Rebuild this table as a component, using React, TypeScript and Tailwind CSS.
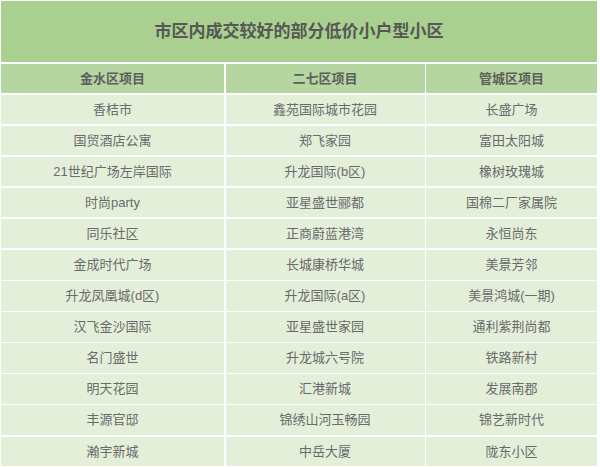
import React from "react";

const rows: [string, string, string][] = [
  ["香桔市", "鑫苑国际城市花园", "长盛广场"],
  ["国贸酒店公寓", "郑飞家园", "富田太阳城"],
  ["21世纪广场左岸国际", "升龙国际(b区)", "橡树玫瑰城"],
  ["时尚party", "亚星盛世郦都", "国棉二厂家属院"],
  ["同乐社区", "正商蔚蓝港湾", "永恒尚东"],
  ["金成时代广场", "长城康桥华城", "美景芳邻"],
  ["升龙凤凰城(d区)", "升龙国际(a区)", "美景鸿城(一期)"],
  ["汉飞金沙国际", "亚星盛世家园", "通利紫荆尚都"],
  ["名门盛世", "升龙城六号院", "铁路新村"],
  ["明天花园", "汇港新城", "发展南郡"],
  ["丰源官邸", "锦绣山河玉畅园", "锦艺新时代"],
  ["瀚宇新城", "中岳大厦", "陇东小区"],
];

const headers = ["金水区项目", "二七区项目", "管城区项目"];

export default function App() {
  return (
    <div
      className="w-[600px] h-[467px] bg-white pl-px pt-px pr-[3px] overflow-hidden"
      style={{ fontFamily: '"Liberation Sans", "Noto Sans CJK SC", sans-serif' }}
    >
      <div className="flex flex-col gap-[1.5px]">
        <div className="h-[61px] bg-[#a9d08e] flex items-center justify-center text-[17px] font-bold text-[#575757]">
          市区内成交较好的部分低价小户型小区
        </div>
        <div className="grid grid-cols-[223px_199px_1fr] gap-[1.5px]">
          {headers.map((h) => (
            <div
              key={h}
              className="h-[29.5px] bg-[#b5d6a1] flex items-center justify-center text-[13px] font-bold text-[#5e5e5e]"
            >
              {h}
            </div>
          ))}
          {rows.map((r, i) =>
            r.map((c, j) => (
              <div
                key={`${i}-${j}`}
                className="h-[29.6px] bg-[#e3efd9] flex items-center justify-center text-[13px] text-[#6a6a6a]"
              >
                {c}
              </div>
            ))
          )}
        </div>
      </div>
    </div>
  );
}
